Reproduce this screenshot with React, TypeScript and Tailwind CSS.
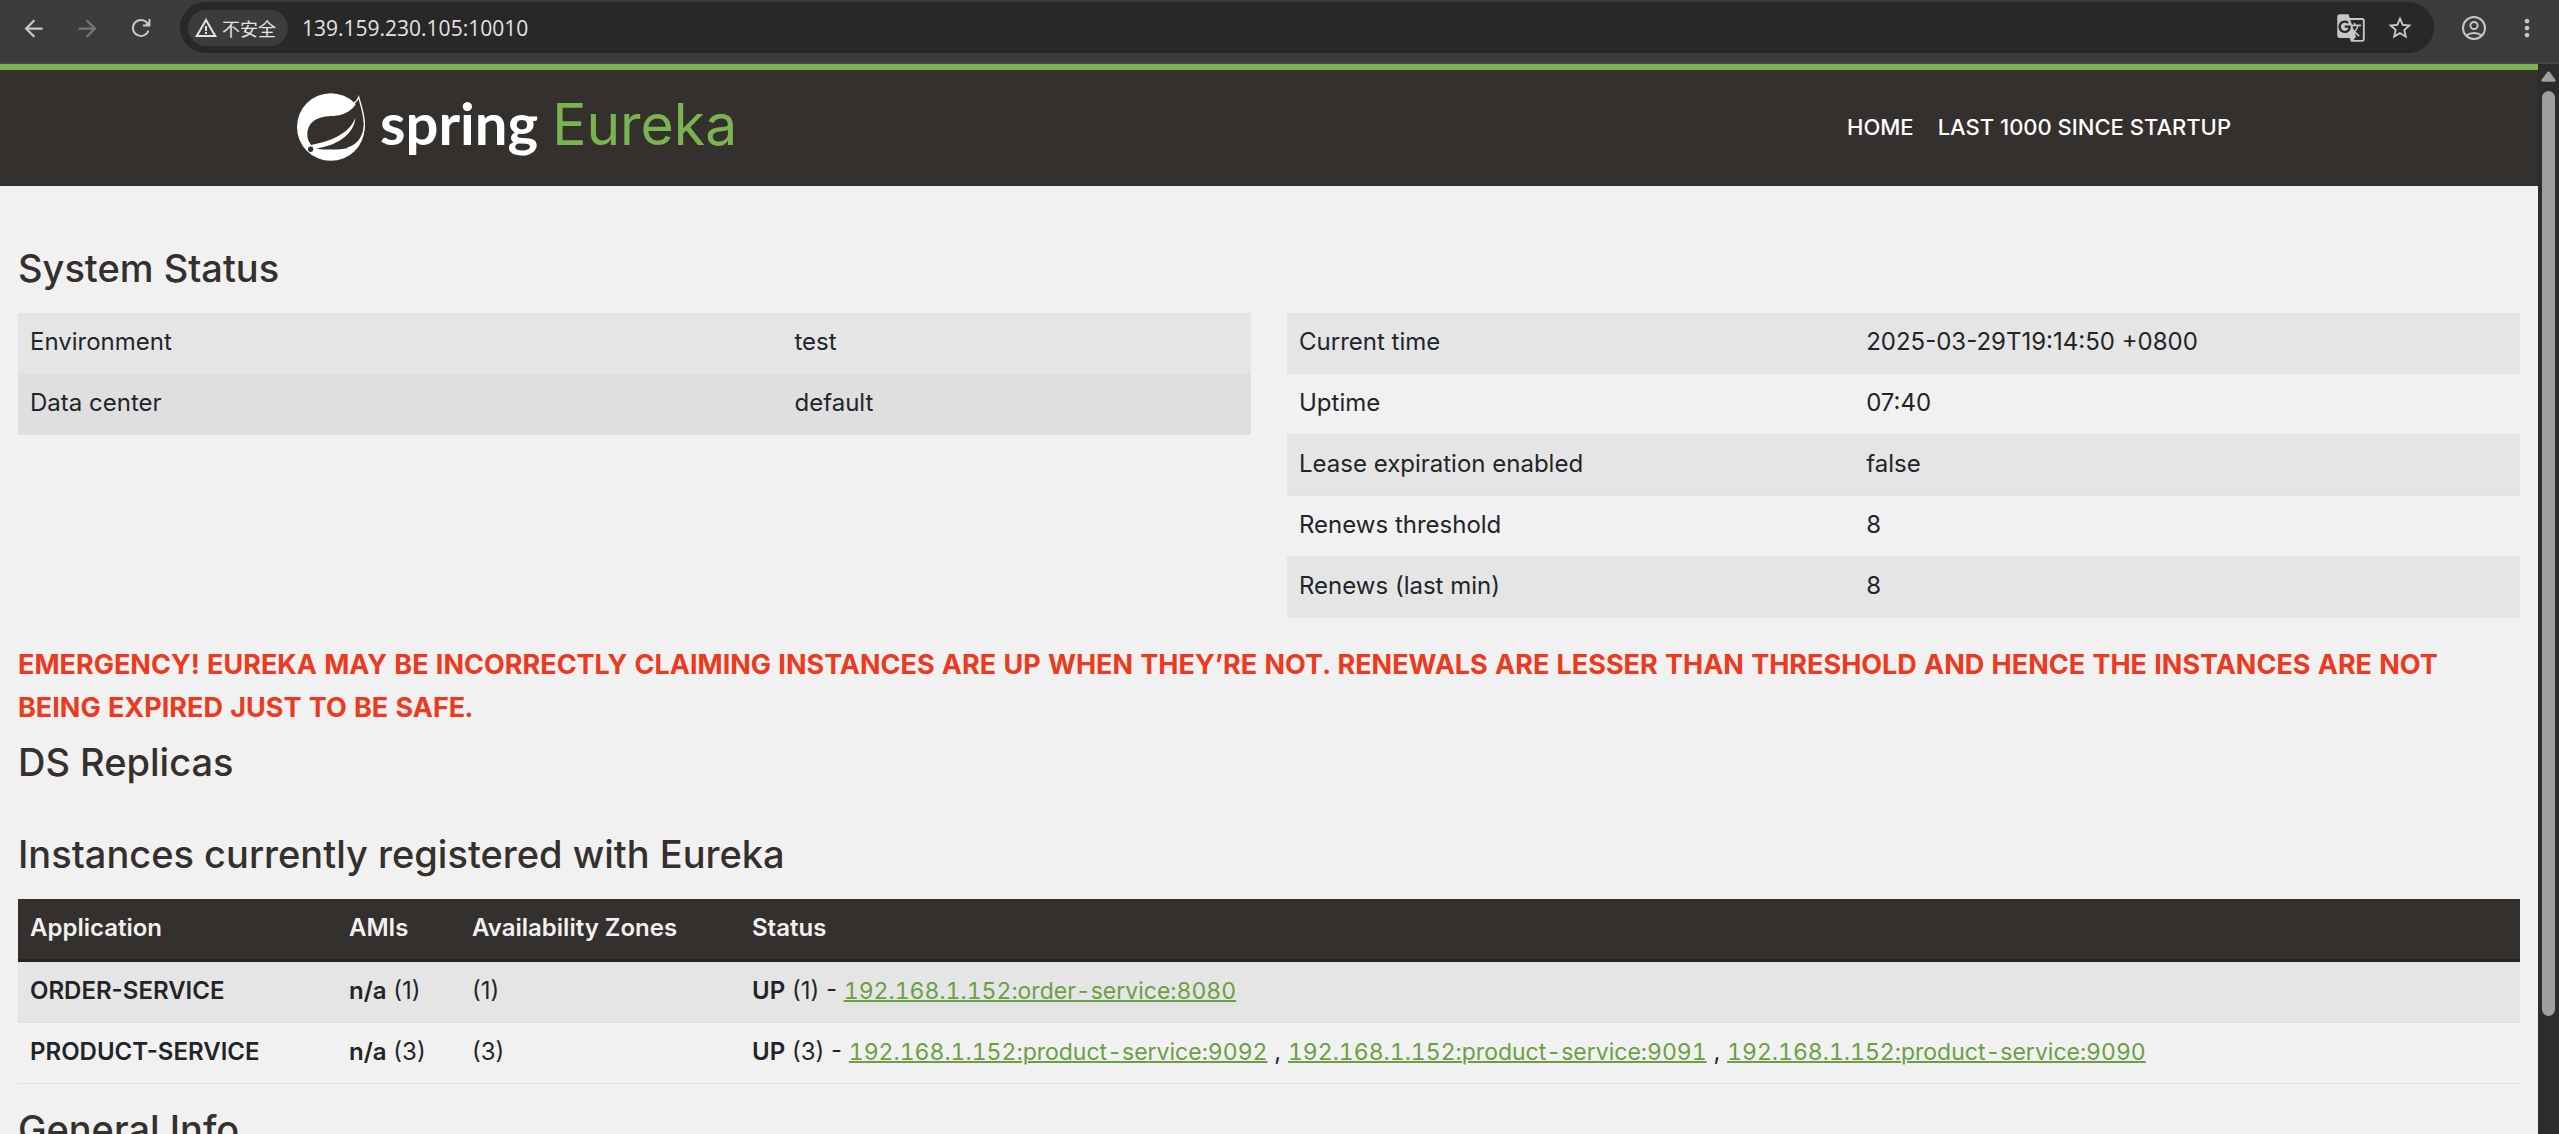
import { MdArrowBack, MdArrowForward, MdGTranslate, MdMoreVert, MdStarBorder, MdWarningAmber } from "react-icons/md";

const environment = [
  { label: "Environment", value: "test" },
  { label: "Data center", value: "default" },
];

const runtime = [
  { label: "Current time", value: "2025-03-29T19:14:50 +0800" },
  { label: "Uptime", value: "07:40" },
  { label: "Lease expiration enabled", value: "false" },
  { label: "Renews threshold", value: "8" },
  { label: "Renews (last min)", value: "8" },
];

const applications = [
  { name: "ORDER-SERVICE", count: 1, instances: ["192.168.1.152:order-service:8080"] },
  {
    name: "PRODUCT-SERVICE",
    count: 3,
    instances: [
      "192.168.1.152:product-service:9092",
      "192.168.1.152:product-service:9091",
      "192.168.1.152:product-service:9090",
    ],
  },
];

function ReloadIcon() {
  return (
    <svg width="20" height="20" viewBox="0 0 20 20" fill="none" stroke="currentColor" strokeWidth="2">
      <path d="M17.5 12.5A8 8 0 1 1 16 4.8L18 7" />
      <path d="M18.4 1v6.4H12" />
      <path d="M18.6 2.6v5h-5z" fill="currentColor" stroke="none" />
    </svg>
  );
}

function ProfileIcon() {
  return (
    <svg width="26" height="26" viewBox="0 0 26 26" fill="none" stroke="currentColor" strokeWidth="2">
      <circle cx="13" cy="13" r="11" />
      <circle cx="13" cy="10.5" r="3.6" />
      <path d="M5.4 20.6c4.4-3.6 10.8-3.6 15.2 0" />
    </svg>
  );
}

function SpringLeaf() {
  return (
    <svg width="69" height="70" viewBox="20 19 208 210" aria-hidden="true">
      <circle cx="122" cy="124" r="102" fill="#fff" />
      {/* leaf with its outline */}
      <path
        d="M206 36C196 66 172 91 122 91C78 92 51 112 51 146C51 162 57 173 66 182L88 191C120 192 150 193 172 188C208 176 224 146 222 112C220 84 212 60 206 36z"
        fill="#34302d"
      />
      <path d="M190 54Q202 46 206 34C213 60 222 84 223 112C224 146 208 178 172 188" fill="none" stroke="#fff" strokeWidth="4" />
      {/* vein */}
      <path d="M196 96C180 138 136 164 62 178L74 189C136 182 192 148 196 96z" fill="#fff" />
      <circle cx="61" cy="191" r="8" fill="#34302d" />
    </svg>
  );
}

/* Browser toolbar */
function Toolbar() {
  return (
    <div className="flex h-16 shrink-0 items-start border-b-2 border-[#464646] bg-[#3c3c3c] pt-[2px] text-[#c7c7c7]">
      <div className="flex h-[52px] w-[180px] shrink-0 items-center gap-[27px] pl-5">
        <button aria-label="Back"><MdArrowBack size={27} /></button>
        <button aria-label="Forward" className="text-[#757575]"><MdArrowForward size={27} /></button>
        <button aria-label="Reload" className="pl-[3px]"><ReloadIcon /></button>
      </div>
      <div className="flex h-[51px] flex-1 items-center rounded-full bg-[#282828] pr-5 pl-2">
        <button className="flex h-9 items-center gap-1 rounded-full bg-[#3c3c3c] pr-3 pl-[6px] text-[18px] text-[#e3e3e3]">
          <MdWarningAmber size={24} />
          <span className="font-['Noto_Sans_CJK_SC',sans-serif]">不安全</span>
        </button>
        <input
          aria-label="Address"
          defaultValue="139.159.230.105:10010"
          className="ml-[14px] min-w-0 flex-1 bg-transparent font-['Open_Sans',sans-serif] text-[21px] text-[#e3e3e3] outline-none"
        />
        <button aria-label="Translate"><MdGTranslate size={30} /></button>
        <button aria-label="Bookmark" className="ml-5"><MdStarBorder size={28} /></button>
      </div>
      <div className="flex h-[52px] w-[125px] shrink-0 items-center gap-[26px] pl-[27px]">
        <button aria-label="Profile"><ProfileIcon /></button>
        <button aria-label="Menu"><MdMoreVert size={28} /></button>
      </div>
    </div>
  );
}

function StatusTable({ rows, labelWidth, rowColors }: { rows: typeof runtime; labelWidth: string; rowColors: string }) {
  return (
    <table className="w-full table-fixed">
      <tbody>
        {rows.map((row) => (
          <tr key={row.label} className={`border-b border-[#dee2e6] ${rowColors}`}>
            <th scope="row" className={`px-3 pt-[11px] pb-[13px] text-left font-normal ${labelWidth}`}>{row.label}</th>
            <td className="px-3 pt-[11px] pb-[13px]">{row.value}</td>
          </tr>
        ))}
      </tbody>
    </table>
  );
}

export default function App() {
  return (
    <div className="flex h-screen flex-col overflow-hidden bg-[#f1f1f1] font-['Inter','Liberation_Sans',sans-serif] text-[24px] leading-[36px] text-[#212529]">
      <Toolbar />
      <div className="flex min-h-0 flex-1">
        <div className="min-w-0 flex-1 overflow-hidden">
          {/* Navbar */}
          <nav className="border-t-6 border-[#7bb350] bg-[#34302d]">
            <div className="mx-auto flex h-[116px] w-[1948px] max-w-full items-center justify-between pb-[3px]">
              <a href="#home" aria-label="spring Eureka" className="flex items-start gap-[14px] pl-[2px]">
                <SpringLeaf />
                <span className="flex items-baseline gap-[14px] leading-[62px]">
                  <span className="font-['Lato',sans-serif] text-[58px] font-bold text-white">spring</span>
                  <span className="text-[57px] text-[#7bb350]">Eureka</span>
                </span>
              </a>
              <ul className="flex gap-6 pr-3 text-[22px] font-medium text-white">
                <li><a href="#home">HOME</a></li>
                <li><a href="#lastn">LAST 1000 SINCE STARTUP</a></li>
              </ul>
            </div>
          </nav>

          <main className="px-[18px]">
            <h1 className="mt-[61px] mb-[23px] text-[38px] leading-[43px] font-medium text-[#34302d]">System Status</h1>
            <div className="grid grid-cols-2 items-start gap-9">
              <StatusTable rows={environment} labelWidth="w-[62%]" rowColors="bg-[#e5e5e5] even:bg-[#dfdfdf]" />
              <StatusTable rows={runtime} labelWidth="w-[46%]" rowColors="odd:bg-[#e5e5e5]" />
            </div>

            <h4 className="mt-[25px] text-[27px] leading-[43px] font-bold text-[#eb3a20] tabular-nums">
              EMERGENCY! EUREKA MAY BE INCORRECTLY CLAIMING INSTANCES ARE UP WHEN THEY’RE NOT. RENEWALS ARE LESSER THAN
              THRESHOLD AND HENCE THE INSTANCES ARE NOT BEING EXPIRED JUST TO BE SAFE.
            </h4>

            <h1 className="mt-3 text-[38px] leading-[43px] font-medium text-[#34302d]">DS Replicas</h1>
            <h1 className="mt-[49px] mb-[23px] text-[38px] leading-[43px] font-medium text-[#34302d]">
              Instances currently registered with Eureka
            </h1>

            <table className="w-full table-fixed">
              <thead>
                <tr className="border-b-3 border-[#212529] bg-[#34302d] text-left text-[#f1f1f1]">
                  <th className="w-[319px] px-3 pt-[11px] pb-[13px] font-semibold">Application</th>
                  <th className="w-[123px] px-3 pt-[11px] pb-[13px] font-semibold">AMIs</th>
                  <th className="w-[280px] px-3 pt-[11px] pb-[13px] font-semibold">Availability Zones</th>
                  <th className="px-3 pt-[11px] pb-[13px] font-semibold">Status</th>
                </tr>
              </thead>
              <tbody>
                {applications.map((app) => (
                  <tr key={app.name} className="border-b border-[#dee2e6] odd:bg-[#e5e5e5]">
                    <td className="px-3 pt-[11px] pb-[13px] font-semibold">{app.name}</td>
                    <td className="px-3 pt-[11px] pb-[13px] whitespace-nowrap"><b className="font-semibold">n/a</b> ({app.count})</td>
                    <td className="px-3 pt-[11px] pb-[13px]">({app.count})</td>
                    <td className="px-3 pt-[11px] pb-[13px]">
                      <b className="font-semibold">UP</b> ({app.count}) -{" "}
                      {app.instances.map((instance, i) => (
                        <span key={instance}>
                          {i > 0 && " , "}
                          <a href={`#${instance}`} className="text-[23px] text-[#69a043] tabular-nums underline decoration-2">{instance}</a>
                        </span>
                      ))}
                    </td>
                  </tr>
                ))}
              </tbody>
            </table>

            <h1 className="mt-6 text-[38px] leading-[43px] font-medium text-[#34302d]">General Info</h1>
          </main>
        </div>

        {/* Scrollbar */}
        <div className="flex w-[21px] shrink-0 flex-col items-center bg-[#2c2c2c] pt-[7px]">
          <svg width="15" height="11" viewBox="0 0 15 11" fill="#9f9f9f">
            <path d="M6.3 1Q7.5-.5 8.7 1L14.6 9Q15 10.6 13.5 10.8H1.5Q0 10.6.4 9z" />
          </svg>
          <div className="mt-[9px] h-[87%] w-[13px] rounded-full bg-[#9f9f9f]" />
        </div>
      </div>
    </div>
  );
}
